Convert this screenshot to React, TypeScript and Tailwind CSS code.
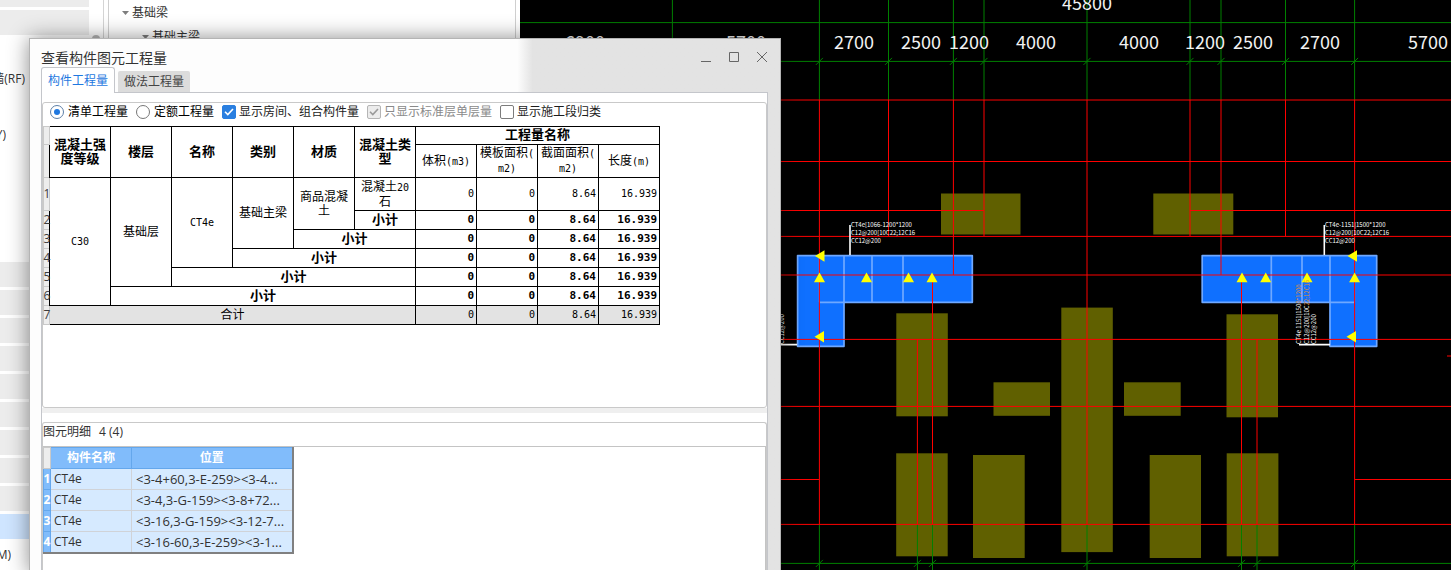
import React, { useState } from 'react';

const GRAY_ROWS = [0, 1, 10, 11, 12, 13, 14, 15, 16, 17, 18];
const NAV_LABELS: Record<number, { text: string; width: string }> = {
  3: { text: '墙(RF)', width: 'w-[25px]' },
  5: { text: 'Y)', width: 'w-[6px]' },
  20: { text: 'M)', width: 'w-[11px]' },
};

const NavList: React.FC = () => (
  <div className="w-[104px] shrink-0 border-r border-[#d4d4d4] overflow-hidden flex">
    <ul className="w-[89px] -mt-[18px] flex flex-col gap-[3px]">
      {Array.from({ length: 21 }, (_, i) => {
        const label = NAV_LABELS[i];
        const bg = i === 19 ? 'bg-[#cfe5ff]' : GRAY_ROWS.includes(i) ? 'bg-[#ececec]' : '';
        return (
          <li key={i} className={`h-[25px] shrink-0 flex items-center ${bg}`}>
            {label && (
              <span className={`${label.width} flex justify-end overflow-hidden whitespace-nowrap`}>{label.text}</span>
            )}
          </li>
        );
      })}
    </ul>
    <div className="mt-[35px] ml-[3px] w-2 h-2 rounded-full bg-[#b8b8b8]" />
  </div>
);

const Caret: React.FC = () => (
  <svg width="7" height="4" viewBox="0 0 7 4" aria-hidden="true">
    <path d="M0 0h7L3.5 4z" fill="#7d7d7d" />
  </svg>
);

const TreePanel: React.FC = () => (
  <div className="ml-1 pt-px w-[408px] shrink-0 border-x border-[#cfcfcf] leading-6">
    <div className="pl-[13px] flex items-center gap-[3px]"><Caret />基础梁</div>
    <div className="pl-[33px] flex items-center gap-[3px]"><Caret />基础主梁</div>
  </div>
);

/* ---------- drawing canvas ---------- */

const OLIVE = [
  [941, 193.5, 79.5, 41], [1153.3, 193.5, 80, 41],
  [896.3, 313.3, 51.5, 103], [1226.5, 314.3, 51.5, 103],
  [993.5, 382.3, 56.5, 33.5], [1124, 382.3, 56.7, 33.5],
  [1061.3, 307.6, 51.5, 244.5],
  [896.2, 453.3, 51.5, 103], [1226.7, 453.3, 51.7, 103],
  [973, 455, 51.7, 103], [1149.7, 455, 51.3, 103],
];

const GRID_X = [
  [819.4, 524], [888.5, 236], [953.4, 275], [984, 236], [1087, 524],
  [1190, 236], [1221, 275], [1285.5, 236], [1354.6, 524],
];
const BOTTOM_X = [819.4, 917.4, 932.5, 1087, 1241.5, 1257, 1354.6];

const RED = [
  [520, 100, 1451, 100], [520, 161.5, 1451, 161.5],
  [520, 210.5, 984, 210.5], [1190, 210.5, 1451, 210.5],
  [520, 236.4, 1451, 236.4], [520, 275, 1451, 275],
  [520, 339.4, 1451, 339.4], [520, 406.4, 1451, 406.4],
  [520, 524.4, 1451, 524.4],
  [520, 479.5, 819, 479.5], [1355, 479.5, 1451, 479.5],
  [1447, 356, 1451, 356],
  [917.4, 339, 917.4, 524], [1257, 339, 1257, 524],
  [932.5, 280, 932.5, 524], [1241.5, 280, 1241.5, 524],
];

const DIMS: [number, number, string][] = [
  [585, 49, '6900'], [746, 49, '5700'], [1087, 10, '45800'],
  [854, 49, '2700'], [921, 49, '2500'], [969, 49, '1200'], [1036, 49, '4000'],
  [1139, 49, '4000'], [1205, 49, '1200'], [1253, 49, '2500'], [1320, 49, '2700'],
  [1428, 49, '5700'],
];

const UP = [819.5, 866.5, 908.5, 932, 1242, 1265.7, 1307, 1354.6];
const LEFT = [[815.5, 256], [815, 336.7], [1348, 256], [1347, 336.7]];

const Canvas: React.FC = () => (
  <svg
    className="w-full h-full block"
    viewBox="520 0 931 570"
    preserveAspectRatio="xMinYMin slice"
    fontFamily='"Noto Sans CJK SC", sans-serif'
  >
    <rect x="520" width="931" height="570" fill="#000" />
    {OLIVE.map(([x, y, w, h], i) => (
      <rect key={i} x={x} y={y} width={w} height={h} fill="#606000" />
    ))}

    <g fill="#0f70ff" stroke="#6fa8ff" strokeWidth="1.7" strokeLinejoin="round">
      <path d="M797.6 255.6H972.3V302.3H844V346.3H797.6z" />
      <path d="M1202.2 255.6H1376.7V346.3H1330V302.3H1202.2z" />
      <path d="M844 255.6V302.3M872 255.6V302.3M903 255.6V302.3M819.3 302.3H844" fill="none" />
      <path d="M1271.3 255.6V302.3M1302 255.6V302.3M1330 255.6V302.3M1330 302.3H1354.6" fill="none" />
    </g>
    <path d="M819.3 256V302.3M1354.6 256V302.3" stroke="#6fa8ff" />

    <g stroke="#008000" fill="none">
      <path d="M520 22.6H1451M520 61.4H1451M520 563.4H1451M672.4 0V61" />
      {GRID_X.map(([x]) => (
        <path key={x} d={`M${x} 0V100M${x - 3.5} 64.9l7 -7`} />
      ))}
      {BOTTOM_X.map((x) => (
        <path key={x} d={`M${x} 524V570M${x - 3.5} 566.9l7 -7`} />
      ))}
    </g>

    <g stroke="#ff0000">
      {GRID_X.map(([x, end]) => (
        <line key={x} x1={x} y1={100} x2={x} y2={end} />
      ))}
      {RED.map(([x1, y1, x2, y2], i) => (
        <line key={i} x1={x1} y1={y1} x2={x2} y2={y2} />
      ))}
    </g>

    <g fill="#ffff00">
      {UP.map((x) => (
        <path key={x} d={`M${x} 272.5l5.5 9.8h-11z`} />
      ))}
      {LEFT.map(([x, y], i) => (
        <path key={i} d={`M${x - 0.5} ${y}l9.5 -5.7v11.4z`} />
      ))}
    </g>

    <g fill="none" stroke="#fff" strokeWidth="1.6">
      <path d="M850 225V255M1324.3 225V255M781 344.6H797M1299 344.6H1330" />
    </g>
    <g fill="#fff" fontSize="6">
      <text x="851" y="226.5">CT4e[1066-1200*1200</text>
      <text x="851" y="234.5">C12@200[10C22;12C16</text>
      <text x="851" y="242.5">CC12@200</text>
      <text x="1325" y="226.5">CT4e-1151|1500*1200</text>
      <text x="1325" y="234.5">C12@200[10C22;12C16</text>
      <text x="1325" y="242.5">CC12@200</text>
      <text transform="translate(1300.5 344) rotate(-90)">
        CT4e 1151|150<tspan fill="#e8912a">0*1200</tspan>
      </text>
      <text transform="translate(1308.5 344) rotate(-90)">
        C12@200[10C<tspan fill="#e8912a">22;12C16</tspan>
      </text>
      <text transform="translate(1316 344) rotate(-90)">CC12@200</text>
      <text transform="translate(784 344) rotate(-90)">CC12@200</text>
    </g>

    <g fill="#f2f2f2" fontSize="18" textAnchor="middle">
      {DIMS.map(([x, y, t]) => (
        <text key={`${x}-${t}`} x={x} y={y}>{t}</text>
      ))}
    </g>
  </svg>
);

/* ---------- dialog controls ---------- */

interface OptionProps {
  label: string;
  checked: boolean;
  onChange: () => void;
  disabled?: boolean;
}

const RadioOption: React.FC<OptionProps> = ({ label, checked, onChange }) => (
  <label className="flex items-center gap-1 text-black">
    <span className="grid place-items-center">
      <input
        type="radio"
        name="quantity-mode"
        checked={checked}
        onChange={onChange}
        className="peer appearance-none [grid-area:1/1] size-[14px] rounded-full border border-[#777] bg-white checked:border-[#5d7fa8]"
      />
      <span className="[grid-area:1/1] size-[6px] rounded-full hidden peer-checked:block bg-[#1f78e0]" />
    </span>
    {label}
  </label>
);

const CheckOption: React.FC<OptionProps> = ({ label, checked, onChange, disabled }) => (
  <label className={`flex items-center gap-[3px] ${disabled ? 'text-[#8a8a8a]' : 'text-[#1c1c1c]'}`}>
    <span className="grid place-items-center">
      <input
        type="checkbox"
        checked={checked}
        onChange={onChange}
        disabled={disabled}
        className="appearance-none [grid-area:1/1] size-[14px] rounded-[2px] border border-[#7c7c7c] bg-white checked:border-[#2a7fe0] checked:bg-[#2a7fe0] disabled:border-[#b5b5b5] disabled:bg-[#ececec]"
      />
      {checked && (
        <svg className="[grid-area:1/1] pointer-events-none" width="10" height="8" viewBox="0 0 10 8" aria-hidden="true">
          <path d="M1 3.8L3.8 6.6L9 1" fill="none" stroke={disabled ? '#9a9a9a' : '#fff'} strokeWidth="1.6" />
        </svg>
      )}
    </span>
    {label}
  </label>
);

const cell = 'border border-black p-0';
const head = 'border border-black p-0 pb-[3px]';
const num = 'border border-black py-0 pl-0 pr-[2px] text-right font-["DejaVu_Sans_Mono","Liberation_Mono",monospace] text-[10px]';
const numBold = 'border border-black py-0 pl-0 pr-[2px] text-right font-["DejaVu_Sans_Mono","Liberation_Mono",monospace] text-[11px] font-bold';
const rowNo = 'border border-[#c9c9c9] bg-[#ededed] p-0 font-normal text-[#3c3c3c]';

const VALUES = ['0', '0', '8.64', '16.939'];

const Mono: React.FC<{ children: React.ReactNode }> = ({ children }) => (
  <span className='font-["DejaVu_Sans_Mono","Liberation_Mono",monospace] text-[10px]'>{children}</span>
);

const RowNo: React.FC<{ n: number }> = ({ n }) => (
  <th scope="row" className={rowNo}>
    <span className="flex justify-center w-[6px]">{n}</span>
  </th>
);

const Values: React.FC<{ bold?: boolean }> = ({ bold }) => (
  <>
    {VALUES.map((v, i) => (
      <td key={i} className={bold ? numBold : num}>{v}</td>
    ))}
  </>
);

const QuantityTable: React.FC = () => (
  <table className="table-fixed w-[616px] border-collapse text-center leading-[14px] text-black">
    <colgroup>
      <col className="w-[6px]" />
      {Array.from({ length: 10 }, (_, i) => <col key={i} className="w-[61px]" />)}
    </colgroup>
    <thead className="text-[13px]">
      <tr className="h-[18px]">
        <td className={rowNo} />
        <th rowSpan={2} className={head}>混凝土强<br />度等级</th>
        <th rowSpan={2} className={head}>楼层</th>
        <th rowSpan={2} className={head}>名称</th>
        <th rowSpan={2} className={head}>类别</th>
        <th rowSpan={2} className={head}>材质</th>
        <th rowSpan={2} className={head}>混凝土类<br />型</th>
        <th colSpan={4} className={head}>工程量名称</th>
      </tr>
      <tr className="h-[33px] text-xs leading-[14px]">
        <td className={rowNo} />
        <th className={`${cell} font-normal`}>体积<Mono>(m3)</Mono></th>
        <th className={`${cell} font-normal`}>模板面积<Mono>(<br />m2)</Mono></th>
        <th className={`${cell} font-normal`}>截面面积<Mono>(<br />m2)</Mono></th>
        <th className={`${cell} font-normal`}>长度<Mono>(m)</Mono></th>
      </tr>
    </thead>
    <tbody>
      <tr className="h-[33px]">
        <RowNo n={1} />
        <td rowSpan={6} className={cell}><Mono>C30</Mono></td>
        <td rowSpan={5} className={cell}>基础层</td>
        <td rowSpan={4} className={cell}><Mono>CT4e</Mono></td>
        <td rowSpan={3} className={cell}>基础主梁</td>
        <td rowSpan={2} className={cell}>商品混凝<br />土</td>
        <td className={cell}>混凝土<Mono>20</Mono><br />石</td>
        <Values />
      </tr>
      {[1, 2, 3, 4, 5].map((span) => (
        <tr key={span} className="h-[19px]">
          <RowNo n={span + 1} />
          <td colSpan={span} className={`${cell} pb-[2px] text-[13px] font-bold`}>小计</td>
          <Values bold />
        </tr>
      ))}
      <tr className="h-[19px] bg-[#e3e3e3]">
        <RowNo n={7} />
        <td colSpan={6} className={cell}>合计</td>
        <Values />
      </tr>
    </tbody>
  </table>
);

const DETAILS = [
  '<3-4+60,3-E-259><3-4...',
  '<3-4,3-G-159><3-8+72...',
  '<3-16,3-G-159><3-12-7...',
  '<3-16-60,3-E-259><3-1...',
];

const DetailTable: React.FC = () => (
  <table className="table-fixed w-[249px] border-collapse border-r-2 border-b-2 border-[#808080] leading-4 text-[#333]">
    <colgroup>
      <col className="w-[7px]" />
      <col className="w-[81px]" />
      <col className="w-[161px]" />
    </colgroup>
    <thead>
      <tr className="h-[21px] text-white">
        <td className="border border-[#c9c9c9] bg-[#ededed] p-0" />
        <th className="border border-[#64a7ec] bg-[#81bcfb] p-0">构件名称</th>
        <th className="border border-[#64a7ec] bg-[#81bcfb] p-0">位置</th>
      </tr>
    </thead>
    <tbody>
      {DETAILS.map((pos, i) => (
        <tr key={pos} className="h-[21px] bg-[#d6eaff]">
          <th scope="row" className="border border-[#64a7ec] bg-[#81bcfb] p-0 text-white">
            <span className="flex justify-center w-[6px]">{i + 1}</span>
          </th>
          <td className="border-y border-r border-[#d0d3d8] py-0 pl-[3px]">CT4e</td>
          <td className="border-y border-[#d0d3d8] py-0 pl-1 text-[13px] whitespace-nowrap overflow-hidden">{pos}</td>
        </tr>
      ))}
    </tbody>
  </table>
);

const Dialog: React.FC = () => {
  const [tab, setTab] = useState(0);
  const [mode, setMode] = useState(0);
  const [showRooms, setShowRooms] = useState(true);
  const [showSections, setShowSections] = useState(false);

  return (
    <section
      role="dialog"
      aria-label="查看构件图元工程量"
      className="absolute left-[29px] top-[38px] -bottom-1 w-[752px] flex flex-col border border-[#b4b4b4] bg-linear-to-r from-[#fdfdfd] from-65% to-[#e3e3e3] to-67% shadow-[0_0_20px_rgba(0,0,0,0.45)]"
    >
      <header className="h-[28px] pt-1 pl-[11px] pr-[11px] flex items-start justify-between text-[#333]">
        <h1 className="text-sm leading-[30px] h-[30px]">查看构件图元工程量</h1>
        <div className="flex items-center gap-[14px] pt-[7px] text-[#666]">
          <button type="button" aria-label="最小化" className="size-[14px] grid place-items-center">
            <svg width="12" height="12" viewBox="0 0 12 12"><path d="M1 10.5h10" stroke="currentColor" /></svg>
          </button>
          <button type="button" aria-label="最大化" className="size-[14px] grid place-items-center">
            <svg width="12" height="12" viewBox="0 0 12 12"><path d="M1.5 1.5h9v9h-9z" fill="none" stroke="currentColor" /></svg>
          </button>
          <button type="button" aria-label="关闭" className="size-[14px] grid place-items-center">
            <svg width="12" height="12" viewBox="0 0 12 12"><path d="M1 1l10 10M11 1L1 11" stroke="currentColor" /></svg>
          </button>
        </div>
      </header>

      <div role="tablist" className="ml-[11px] h-[25px] flex items-end gap-[3px]">
        {['构件工程量', '做法工程量'].map((name, i) => (
          <button
            key={name}
            type="button"
            role="tab"
            aria-selected={tab === i}
            onClick={() => setTab(i)}
            className={
              tab === i
                ? 'relative z-10 h-[26px] w-[74px] shrink-0 -mb-px rounded-t-[3px] border border-b-0 border-[#c4c6cb] bg-white text-[#1f78e0]'
                : 'h-[21px] w-[72px] shrink-0 rounded-t-[2px] bg-[#dcdcdc] text-[#444]'
            }
          >
            {name}
          </button>
        ))}
      </div>

      <div className="ml-[11px] mr-3 flex-1 flex flex-col border border-b-0 border-[#c4c6cb] bg-white pt-[9px]">
        <div className="h-[306px] shrink-0 rounded-[3px] border border-[#c9c9c9]">
          <div className="h-[23px] pl-[7px] pb-[6px] flex items-center gap-2">
            <RadioOption label="清单工程量" checked={mode === 0} onChange={() => setMode(0)} />
            <RadioOption label="定额工程量" checked={mode === 1} onChange={() => setMode(1)} />
            <CheckOption label="显示房间、组合构件量" checked={showRooms} onChange={() => setShowRooms(!showRooms)} />
            <CheckOption label="只显示标准层单层量" checked disabled onChange={() => undefined} />
            <CheckOption label="显示施工段归类" checked={showSections} onChange={() => setShowSections(!showSections)} />
          </div>
          <QuantityTable />
        </div>
        <div className="h-[5px] shrink-0 bg-[#efefef]" />
        <div className="mt-[9px] flex-1 flex flex-col rounded-t-[3px] border border-b-0 border-[#c9c9c9]">
          <h2 className="h-[23px] leading-[18px] text-[#333]">
            图元明细<span className="ml-2">4 (4)</span>
          </h2>
          <div className="flex-1 border-t border-r border-[#c4c4c4]">
            <DetailTable />
          </div>
        </div>
      </div>
    </section>
  );
};

const App: React.FC = () => (
  <main className='relative h-screen overflow-hidden flex bg-white text-xs text-[#333] font-["Open_Sans","Noto_Sans_CJK_SC",sans-serif]'>
    <NavList />
    <TreePanel />
    <div className="ml-1 flex-1 min-w-0 bg-black">
      <Canvas />
    </div>
    <Dialog />
  </main>
);

export default App;
